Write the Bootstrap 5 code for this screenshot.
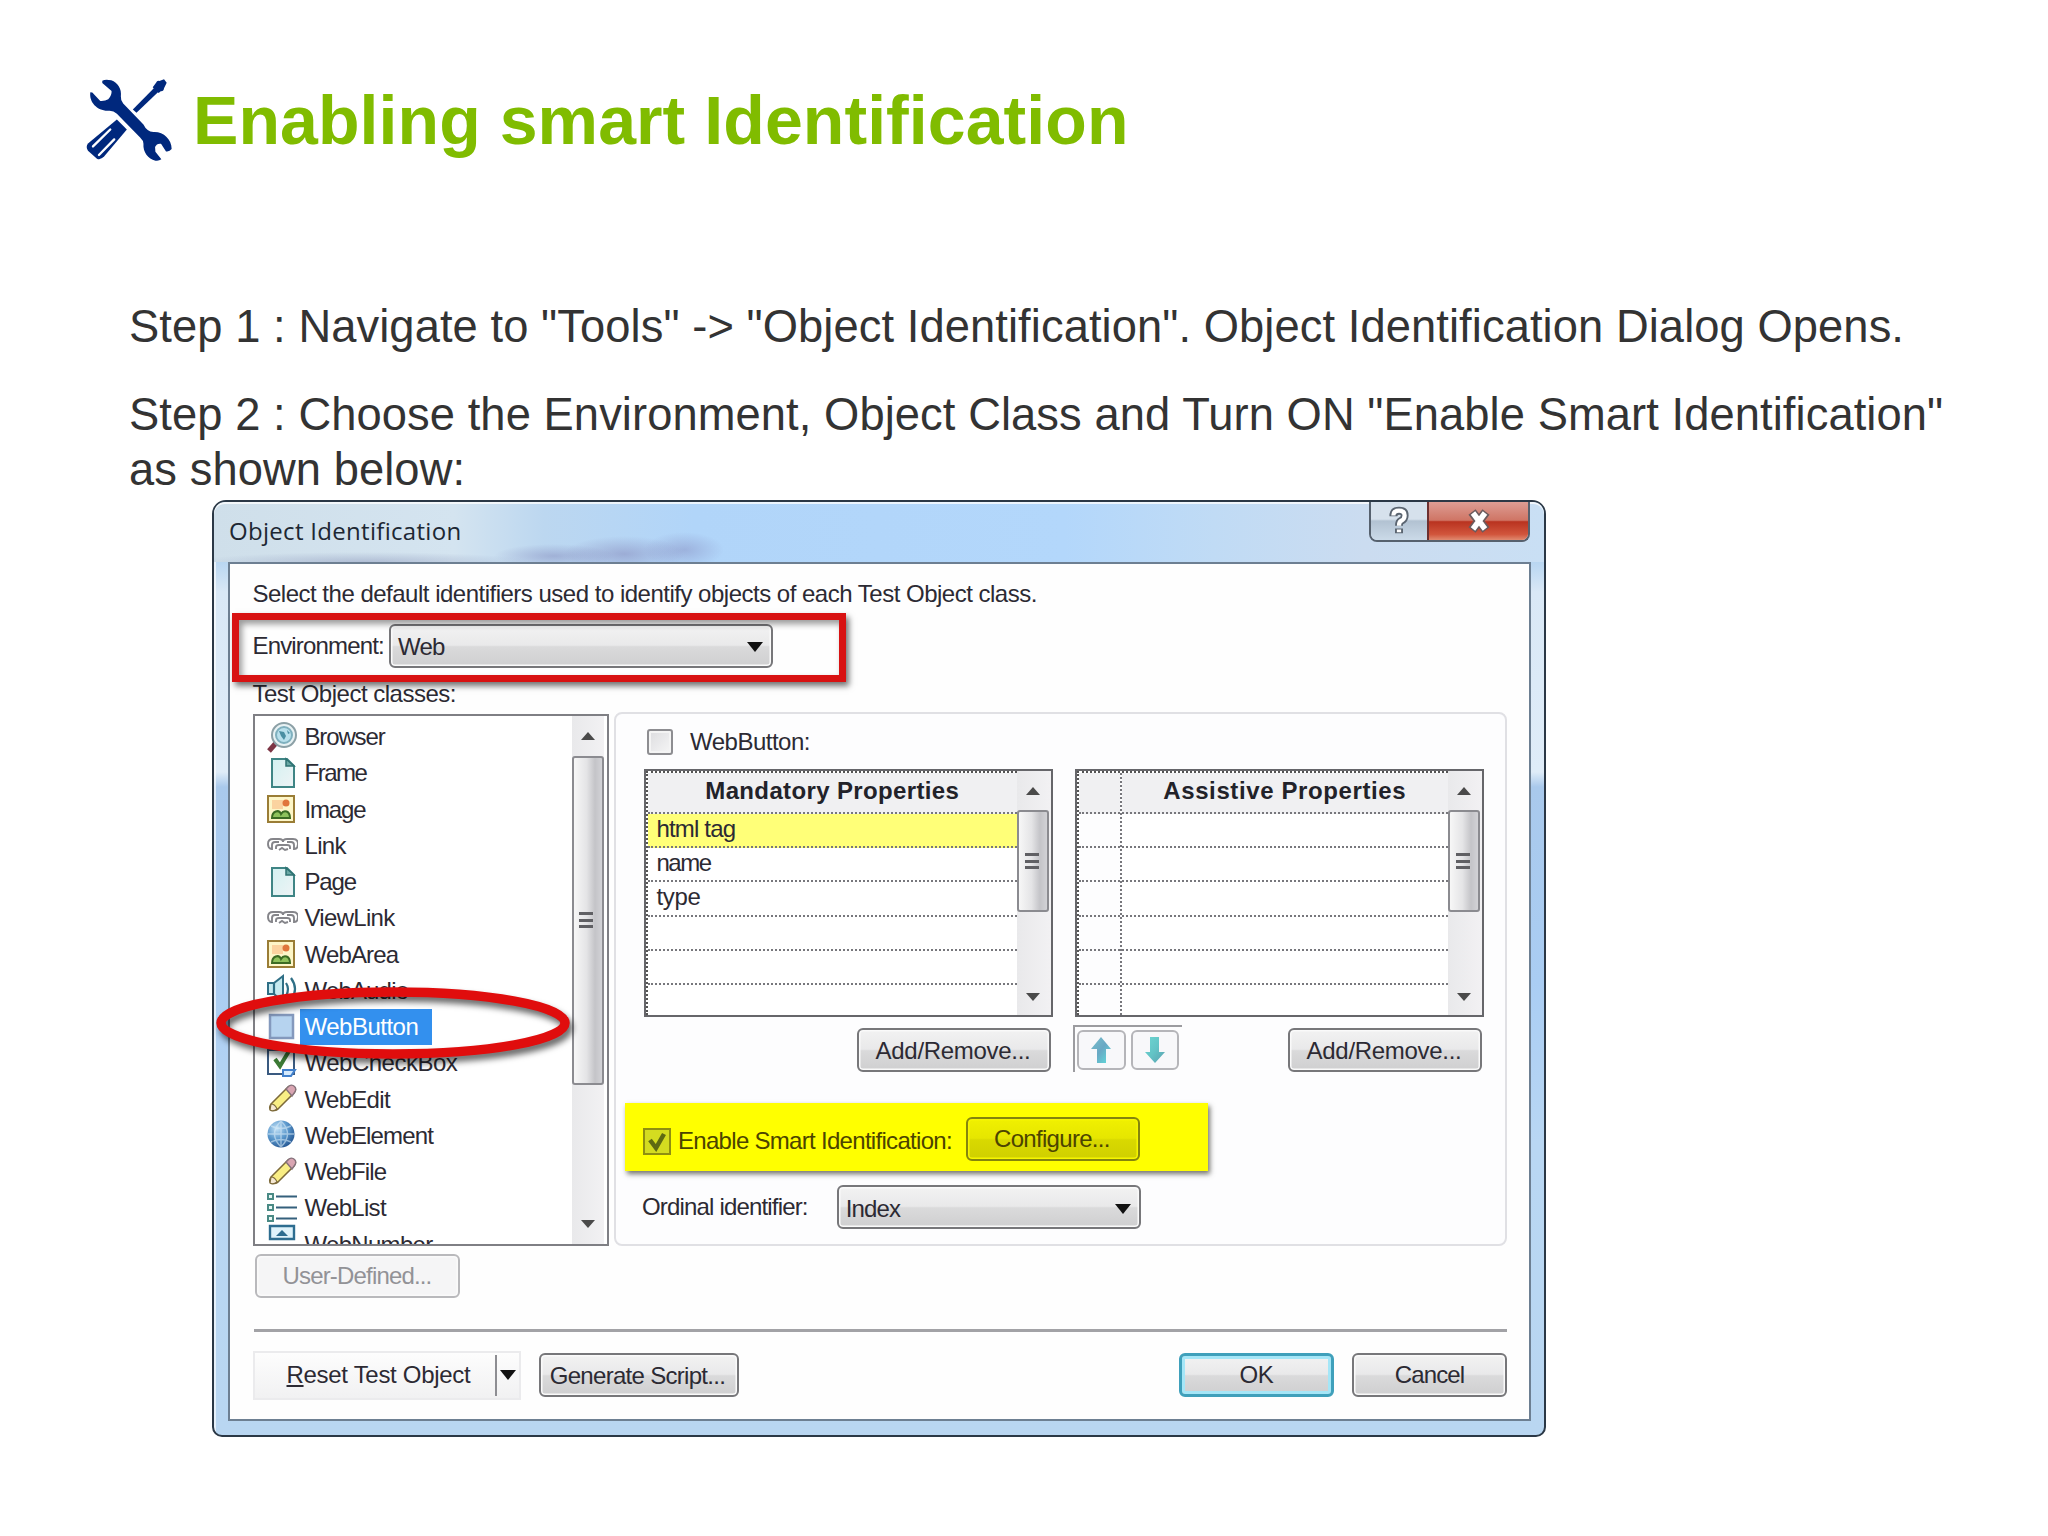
<!DOCTYPE html>
<html lang="en">
<head>
<meta charset="utf-8">
<title>Enabling smart Identification</title>
<link href="https://cdn.jsdelivr.net/npm/bootstrap@5.3.0/dist/css/bootstrap.min.css" rel="stylesheet">
<style>
body{width:2048px;height:1536px;overflow:hidden;background:#fff;font-family:"Liberation Sans",Arial,sans-serif;color:#333}
.slide{width:2048px;height:1536px;position:relative;padding:78px 0 0 86px}
.tools{width:87px;height:83px;display:block;margin-top:1px}
.slide-title{font-size:68px;font-weight:700;line-height:84px;letter-spacing:.08px;color:#80bc00;margin:0 0 0 20px;white-space:nowrap}
.steps{font-size:45.3px;line-height:55px;letter-spacing:.08px;padding:136.500px 0 0 43px;color:#333}
.steps p{margin:0 0 33.5px;white-space:nowrap}
.steps p+p{margin-bottom:0}
.dlg{width:1334px;height:937px;margin:3px 0 0 126px;border:2.5px solid #2b3846;border-radius:14px 14px 10px 10px;position:relative;font-size:24px;line-height:30px;color:#2c2a33;white-space:nowrap;
 background:linear-gradient(90deg,rgba(255,255,255,.65) 0 2px,transparent 2px),linear-gradient(180deg,transparent 0 60px,#d9e8f6 90px,#dfecf8 270px,#a9c9ec 285px,#aacdf3 480px,#b9d7f3 640px,#b9d6f1 100%),#b9d6f1}
.dlg-head{height:60px;border-radius:11px 11px 0 0;padding-left:15px;position:relative;box-shadow:inset 0 2px 0 rgba(255,255,255,.75);
 background:radial-gradient(ellipse 60px 12px at 340px 54px,rgba(120,120,175,.4),transparent),radial-gradient(ellipse 60px 18px at 410px 52px,rgba(120,115,170,.42),transparent),radial-gradient(ellipse 40px 18px at 470px 48px,rgba(125,125,180,.4),transparent),radial-gradient(ellipse 170px 10px at 150px 60px,rgba(125,135,175,.4),transparent),linear-gradient(90deg,#cfdfea 0,#d4e4f0 240px,#bcd7f0 330px,#b1d5f9 480px,#b3d7fb 850px,#c0dbf5 1000px,#cbdcf0 1150px,#c9dff4 100%)}
.dlg-name{font-family:"Open Sans","Noto Sans",sans-serif;font-size:24px;color:#1d2733;line-height:58px;letter-spacing:.3px}
.winbtns{height:40px;border:2px solid #56616e;border-top:0;border-radius:0 0 8px 8px;overflow:hidden;margin-right:14px}
.wb-help{width:58px;background:linear-gradient(#d6e1ec 0 45%,#b2c2d2 50%,#cbdae8);border-right:2px solid #6d3030}
.wb-close{width:99px;background:linear-gradient(#dd9d94 0,#cf7565 48%,#b93320 52%,#d1553c 85%,#e08a70)}
.client{margin:0 13px 0 13.5px;height:859px;border:2px solid #6d7f92;background:#fefefe;padding:0 22px 0 23px}
.ls-3{letter-spacing:-.3px}
.ls-5{letter-spacing:-.5px}
.ls-7{letter-spacing:-.7px}
.ls-8{letter-spacing:-.83px}
.ls-11{letter-spacing:-1.15px}
.ls-15{letter-spacing:-1.5px}
.r-intro{height:60px}
.r-env{height:44px}
.env-sel{width:384px;margin-left:5px}
.xpsel,.xpbtn{height:44px;border:2px solid #77777a;border-radius:6px;padding:0;background:linear-gradient(#f2f2f2 0,#e9e9ea 48%,#dadadb 52%,#cfcfd0 100%);box-shadow:inset 0 0 0 1.5px #fafafa;font-size:24px;line-height:30px;color:#2c2a33;display:flex;align-items:center}
.xpbtn{justify-content:center}
.xpsel{justify-content:space-between;padding:2px 8px 0 7px}
.tri{width:0;height:0;border:8px solid transparent;border-top:10px solid #111;border-bottom:0;display:block}
.r-cls{height:44px;padding-top:7px}
.left{width:356px;padding-top:2px}
.lbox{height:532px;border:2px solid #7f7f84;background:#fff;overflow:hidden;padding:3px 3px 0 13px}
.itm{height:36.25px;gap:4px}
.itm svg{width:31px;height:32px;flex:none;overflow:visible;margin:-1px 0 0 -1px}
.itm svg+.cap{margin-left:1px}
.itm .cap{line-height:36px;padding:0 2px}
.itm.on svg+.cap{background:#3390ee;color:#fff;width:132px;margin-left:-2px;padding-left:5px}
.itm svg.num{margin-top:-8px}
.sbar{width:32px;background:linear-gradient(90deg,#e9e9eb,#f2f1f3)}
.lbox .sbar{margin-top:-3px}
.sarr{height:40px}
.thumb{border:2px solid #8b8b90;border-radius:3px;background:linear-gradient(90deg,#f7f7f7,#e4e4e6 45%,#c4c4c8 75%,#d2d2d6)}
.thumb-l{height:329px}
.thumb-s{height:102px}
.grip{width:14px;height:17px;margin-right:3px;background:repeating-linear-gradient(#606064 0 3px,transparent 3px 6.6px)}
.u{border:0 solid transparent;border-width:0 7px 8px;border-bottom-color:#4a4a4a;display:block}
.d{border:0 solid transparent;border-width:8px 7px 0;border-top-color:#4a4a4a;display:block}
.grp{width:893px;height:534px;border:2px solid #e0e0e4;border-radius:8px;background:#fdfdfe}
.g-h{height:55px;padding-left:31px;gap:17px}
.cb{width:26px;height:26px;border:2px solid #8d8d91;border-radius:3px;background:linear-gradient(135deg,#dcdcdf,#f6f6f6);box-shadow:inset 0 0 0 2px #f4f4f4}
.tbls{padding-left:27.500px;gap:21.500px}
.tb{width:409.5px;height:248px;border:2.5px solid #66666a;background:#fff;overflow:hidden}
.tb-m{border-top:2px dotted #555;border-left:2px dotted #555}
.th{height:41px;background:#f0f0f2;font-weight:700;color:#222229;border-bottom:2px dotted #77777c;padding-bottom:3px;letter-spacing:.36px}
.th-a{letter-spacing:.61px}
.tr{height:34.2px;border-bottom:2px dotted #77777c;padding-left:9px;line-height:30px}
.tr.hl{background:#ffff78}
.c1{width:43px;flex:none;border-right:2px dotted #77777c;background:#fdfdfe}
.tb .sbar{width:34px;padding-right:2px}
.tb .sarr{height:39px}
.tb .mt-auto{height:36px}
.b-row{margin:11px 0 0 241px}
.add-b{width:194px}
.add-b span,.gen span{margin:2px 2px 0 0}
.tbar{width:109px;height:47px;margin:-3px 106px 0 22px;border-top:2px solid #9c9ca0;border-left:2px solid #9c9ca0;gap:5px;padding:3px 0 0 2px}
.tbar span{width:48.5px;height:40px;border:2px solid #b5b5b9;border-radius:6px;background:#f8f8fa;display:flex;justify-content:center;align-items:center}
.yel{width:583px;height:68px;margin:31px 0 0 9px;background:#ffff00;box-shadow:2px 3px 5px rgba(70,70,60,.75);padding:4px 0 0 18px;color:#4c4400}
.yel .xpbtn{width:174px;margin-left:14px;padding-right:2px;background:linear-gradient(#f0f000,#e6e600 48%,#d9d900 52%,#cfcf00);border-color:#85850d;box-shadow:inset 0 0 0 1.5px #f6f600;color:#4c4400}
.ycb{width:28px;height:27px;margin:4px 7px 0 0;border:2px solid #8f8f10;background:#d4dc20}
.ycb+span{padding-top:4px}
.ord{margin:14px 0 0 26px;height:44px}
.ord .xpsel{width:304px;margin-left:29px;padding-top:3px}
.ud{width:205px;margin:8px 0 0 2px;border-color:#b9b9bc;background:#f5f5f6;color:#929296}
.sepl{height:2.5px;background:#a2a2a6;margin:31px 0 0 1px}
.foot{margin-top:19px;height:48px}
.foot .xpbtn{margin-top:2px;padding-top:1px}
.reset{width:268px;height:49px;border:2px solid #ebebed;background:linear-gradient(#fdfdfd,#f1f1f2);padding-left:32px}
.reset .vl{width:2px;height:41px;margin:0 3px 0 25px;background:#8d8d92}
.gen{width:200px;margin-left:18px}
.okc{width:155px}
.okc+.okc{margin-left:18px}
.ok{border:3px solid #3fa0bb;box-shadow:inset 0 0 0 3px #a5e6f7}
.redbox{position:absolute;left:17.5px;top:110.500px;width:614px;height:69px;border:7px solid #d81212;box-shadow:3px 4px 6px rgba(0,0,0,.55),inset 3px 4px 6px rgba(0,0,0,.4)}
.ring{position:absolute;left:-5px;top:478px;width:370px;height:90px;filter:drop-shadow(3px 5px 3px rgba(0,0,0,.6))}
</style>
<script src="https://cdn.jsdelivr.net/npm/bootstrap@5.3.0/dist/js/bootstrap.bundle.min.js"></script>
</head>
<body>
<svg width="0" height="0" class="position-absolute">
<defs>
<linearGradient id="gpg" x1="0" y1="0" x2="1" y2="1"><stop offset="0" stop-color="#d3f1f1"/><stop offset="1" stop-color="#eef3f5"/></linearGradient>
<radialGradient id="ggl" cx=".35" cy=".3" r=".8"><stop offset="0" stop-color="#c3e2f7"/><stop offset=".5" stop-color="#5b98cc"/><stop offset="1" stop-color="#1f4f8c"/></radialGradient>
<linearGradient id="gar" x1="0" y1="0" x2="1" y2="1"><stop offset="0" stop-color="#79bfcb"/><stop offset=".5" stop-color="#69a8c4"/><stop offset="1" stop-color="#5fe0dd"/></linearGradient>
<linearGradient id="gad" x1="0" y1="0" x2="1" y2="1"><stop offset="0" stop-color="#6fd6d2"/><stop offset=".5" stop-color="#63c4c6"/><stop offset="1" stop-color="#5a9fae"/></linearGradient>
<symbol id="i-page" viewBox="0 0 31 32"><path d="M5 2h15l7 7v21H5z" fill="url(#gpg)" stroke="#3f8585" stroke-width="2"/><path d="M19 2v7h8z" fill="#6aa9a6" stroke="#2f7272" stroke-width="1.5"/></symbol>
<symbol id="i-img" viewBox="0 0 31 32"><path d="M1 3h26v26H1z" fill="#fdf6c8" stroke="#9a7d36" stroke-width="2"/><path d="M5 7h11v9H5z" fill="#fbd3a0"/><circle cx="19" cy="10" r="3.500" fill="#e0763c"/><path d="M5 25c0-7 7-9 9-4 3-5 9-3 9 4z" fill="#8fc25c" stroke="#3c6b23" stroke-width="2"/></symbol>
<symbol id="i-link" viewBox="0 0 31 32"><path d="M4 20q-3-1-3-5 0-5 5-5h6q4 0 4 3 0-3 4-3h6q5 0 5 5 0 4-3 5M5 21v-5q0-3 3-3h4M27 21v-5q0-3-3-3h-4M9 20v-2q0-2 3-2h8q3 0 3 2v2M12 21l3-2 3 2 3-1" fill="none" stroke="#85858a" stroke-width="1.9"/></symbol>
<symbol id="i-pencil" viewBox="0 0 31 32"><path d="M3 26q-1-3 2-6L21 4q3-2 6 0t0 6L11 26q-4 3-8 0z" fill="#f9ee84" stroke="#7d6a3a" stroke-width="1.6"/><path d="M19 6l3-3q3-2 5.500.5t0 6L25 13z" fill="#d9a5b2" stroke="#86727c" stroke-width="1.4"/><path d="M3 27l1-6q4 0 6 5-4 3-7 1z" fill="#f6e9d4" stroke="#7d6a3a" stroke-width="1.2"/></symbol>
</defs>
</svg>
<main class="slide">
<header class="d-flex">
<svg class="tools" viewBox="50 55 260 250"><g fill="#00287d"><path d="M190 147L254 82 268 93 201 157z"/><path d="M250 80L260 66Q263 59 270 61L284 56 292 66 284 83Q283 93 274 92L268 97 260 91z"/><path d="M142 177L172 207 104 288Q92 301 82 295L55 271Q47 260 55 249z"/><path d="M98 60Q108 55 125 59C145 66 157 85 154 108Q153 120 161 129L222 192Q232 213 252 215C281 213 307 236 307 266Q300 275 290 273L275 250Q262 248 257 260L258 274 276 297Q268 303 258 301C236 296 220 275 222 250Q222 240 212 231L142 160Q130 148 114 151C82 150 58 125 62 95L68 96 92 121Q106 122 116 116 127 104 126 91L98 67z"/></g><path d="M122 207L70 258M134 237L88 284" stroke="#fff" stroke-width="7" stroke-linecap="round"/></svg>
<h1 class="slide-title">Enabling smart Identification</h1>
</header>
<section class="steps">
<p>Step 1 : Navigate to "Tools" -&gt; "Object Identification". Object Identification Dialog Opens.</p>
<p>Step 2 : Choose the Environment, Object Class and Turn ON "Enable Smart Identification"<br>as shown below:</p>
</section>
<section class="dlg">
<div class="dlg-head d-flex justify-content-between align-items-start">
<span class="dlg-name">Object Identification</span>
<div class="winbtns d-flex">
<div class="wb-help d-flex align-items-center justify-content-center"><svg width="24" height="30" viewBox="0 0 24 32"><path d="M6 11Q6 5 12 5t6 5q0 4-4 6-2 1-2 5M12 24v5" fill="none" stroke="#5a6470" stroke-width="8.500"/><path d="M6 10Q6 5 12 5t6 5q0 4-4 6-2 1-2 5M12 25v3" fill="none" stroke="#fff" stroke-width="4.500"/></svg></div>
<div class="wb-close d-flex align-items-center justify-content-center"><svg width="26" height="24" viewBox="0 0 26 24"><path d="M6 3l14 18M20 3L6 21" stroke="#6b5a5c" stroke-width="9"/><path d="M7 4l12 16M19 4L7 20" stroke="#fff" stroke-width="5.500"/></svg></div>
</div>
</div>
<div class="client">
<div class="r-intro d-flex align-items-center"><span class="ls-5">Select the default identifiers used to identify objects of each Test Object class.</span></div>
<div class="r-env d-flex align-items-center"><span class="ls-8">Environment:</span><div class="xpsel env-sel"><span class="ls-7">Web</span><i class="tri"></i></div></div>
<div class="r-cls d-flex align-items-center"><span class="ls-5">Test Object classes:</span></div>
<div class="d-flex justify-content-between">
<div class="left">
<div class="lbox d-flex justify-content-between">
<div>
<div class="itm d-flex align-items-center"><svg viewBox="0 0 31 32"><path d="M9 22L2 30" stroke="#7d3545" stroke-width="5"/><circle cx="17" cy="14" r="12" fill="#e8f2f4" stroke="#8ca0a6" stroke-width="2"/><circle cx="17" cy="14" r="8" fill="#b9e0ec" stroke="#7fb0be" stroke-width="2"/><path d="M12 10l5 1 2 4-2 4-3-4zM20 9l3 3-2 1z" fill="#4a8ea2"/></svg><span class="cap ls-11">Browser</span></div>
<div class="itm d-flex align-items-center"><svg><use href="#i-page"/></svg><span class="cap ls-15">Frame</span></div>
<div class="itm d-flex align-items-center"><svg><use href="#i-img"/></svg><span class="cap ls-11">Image</span></div>
<div class="itm d-flex align-items-center"><svg><use href="#i-link"/></svg><span class="cap ls-7">Link</span></div>
<div class="itm d-flex align-items-center"><svg><use href="#i-page"/></svg><span class="cap ls-11">Page</span></div>
<div class="itm d-flex align-items-center"><svg><use href="#i-link"/></svg><span class="cap ls-7">ViewLink</span></div>
<div class="itm d-flex align-items-center"><svg><use href="#i-img"/></svg><span class="cap ls-8">WebArea</span></div>
<div class="itm d-flex align-items-center"><svg viewBox="0 0 31 32"><path d="M1 9h6l9-7v26l-9-8H1z" fill="#c6eaf0" stroke="#2f6f86" stroke-width="2"/><path d="M7 9v11M19 9q4 6 0 13M24 4q8 11 0 22" fill="none" stroke="#2f6f86" stroke-width="2.200"/></svg><span class="cap ls-8">WebAudio</span></div>
<div class="itm on d-flex align-items-center"><svg viewBox="0 0 31 32"><path d="M3 4h23v23H3z" fill="#b6d3ef" stroke="#8499bd" stroke-width="2.500"/></svg><span class="cap ls-5">WebButton</span></div>
<div class="itm d-flex align-items-center"><svg viewBox="0 0 31 32"><path d="M1 3h26v24H1z" fill="#fff" stroke="#3a5a80" stroke-width="2"/><path d="M8 12l5 7L22 4" fill="none" stroke="#3c7a35" stroke-width="4"/><path d="M16 23h12l-4 6h-8z" fill="#d5eafc" stroke="#4180cc" stroke-width="2"/></svg><span class="cap ls-5">WebCheckBox</span></div>
<div class="itm d-flex align-items-center"><svg><use href="#i-pencil"/></svg><span class="cap ls-7">WebEdit</span></div>
<div class="itm d-flex align-items-center"><svg viewBox="0 0 31 32"><circle cx="14" cy="15" r="13.500" fill="url(#ggl)"/><path d="M1 15h26M14 2v26M4 7q10 5 20 0M4 23q10-5 20 0M14 2q-13 13 0 26M14 2q13 13 0 26" fill="none" stroke="#d5e9f7" stroke-opacity=".6" stroke-width="1.400"/></svg><span class="cap ls-8">WebElement</span></div>
<div class="itm d-flex align-items-center"><svg><use href="#i-pencil"/></svg><span class="cap ls-8">WebFile</span></div>
<div class="itm d-flex align-items-center"><svg viewBox="0 0 31 32"><path d="M1 2h5v5H1zM1 13h5v5H1zM1 24h5v5H1z" fill="#e7f6f4" stroke="#4a8a85" stroke-width="2"/><path d="M9 4.500h21M9 15.500h21M9 26.500h21" stroke="#35607c" stroke-width="2.200"/></svg><span class="cap ls-7">WebList</span></div>
<div class="itm d-flex align-items-center"><svg class="num" viewBox="0 0 31 32"><path d="M3 1h24v13H3z" fill="#dff3fb" stroke="#2d6d90" stroke-width="2.400"/><path d="M15 5l6 6H9z" fill="#2d6d90"/></svg><span class="cap ls-7">WebNumber</span></div>
</div>
<div class="sbar d-flex flex-column">
<div class="sarr d-flex align-items-center justify-content-center"><i class="u"></i></div>
<div class="thumb thumb-l d-flex align-items-center justify-content-center"><i class="grip"></i></div>
<div class="mt-auto sarr d-flex align-items-center justify-content-center"><i class="d"></i></div>
</div>
</div>
<div class="xpbtn ud"><span class="ls-8">User-Defined...</span></div>
</div>
<div class="grp">
<div class="g-h d-flex align-items-center"><span class="cb"></span><span class="ls-5">WebButton:</span></div>
<div class="tbls d-flex">
<div class="tb d-flex">
<div class="tb-m flex-grow-1">
<div class="th d-flex align-items-center justify-content-center">Mandatory Properties</div>
<div class="tr hl ls-8">html tag</div><div class="tr ls-15">name</div><div class="tr ls-3">type</div><div class="tr"></div><div class="tr"></div>
</div>
<div class="sbar d-flex flex-column"><div class="sarr d-flex align-items-center justify-content-center"><i class="u"></i></div><div class="thumb thumb-s d-flex align-items-center justify-content-center"><i class="grip"></i></div><div class="mt-auto sarr d-flex align-items-center justify-content-center"><i class="d"></i></div></div>
</div>
<div class="tb d-flex">
<div class="tb-m flex-grow-1 d-flex">
<div class="c1"><div class="th"></div><div class="tr"></div><div class="tr"></div><div class="tr"></div><div class="tr"></div><div class="tr"></div></div>
<div class="flex-grow-1"><div class="th th-a d-flex align-items-center justify-content-center">Assistive Properties</div><div class="tr"></div><div class="tr"></div><div class="tr"></div><div class="tr"></div><div class="tr"></div></div>
</div>
<div class="sbar d-flex flex-column"><div class="sarr d-flex align-items-center justify-content-center"><i class="u"></i></div><div class="thumb thumb-s d-flex align-items-center justify-content-center"><i class="grip"></i></div><div class="mt-auto sarr d-flex align-items-center justify-content-center"><i class="d"></i></div></div>
</div>
</div>
<div class="b-row d-flex">
<div class="xpbtn add-b"><span class="ls-3">Add/Remove...</span></div>
<div class="tbar d-flex"><span><svg width="22" height="28" viewBox="0 0 22 28"><path d="M11 1l10 12h-5v14H7V13H1z" fill="url(#gar)"/></svg></span><span><svg width="22" height="28" viewBox="0 0 22 28"><path d="M11 27L1 16h5V1h9v15h6z" fill="url(#gad)"/></svg></span></div>
<div class="xpbtn add-b"><span class="ls-3">Add/Remove...</span></div>
</div>
<div class="yel d-flex align-items-center"><span class="ycb"><svg width="24" height="23" class="d-block" viewBox="0 0 24 23"><path d="M5 10l6 8L19 4" fill="none" stroke="#5e6a12" stroke-width="4.500"/></svg></span><span class="ls-7">Enable Smart Identification:</span><div class="xpbtn"><span class="ls-7">Configure...</span></div></div>
<div class="ord d-flex align-items-center"><span class="ls-8">Ordinal identifier:</span><div class="xpsel"><span class="ls-8">Index</span><i class="tri"></i></div></div>
</div>
</div>
<div class="sepl"></div>
<div class="foot d-flex">
<div class="reset d-flex align-items-center"><span class="ls-3"><u>R</u>eset Test Object</span><span class="vl"></span><i class="tri"></i></div>
<div class="xpbtn gen"><span class="ls-7">Generate Script...</span></div>
<div class="xpbtn okc ok ms-auto"><span class="ls-3">OK</span></div>
<div class="xpbtn okc"><span class="ls-8">Cancel</span></div>
</div>
</div>
<div class="redbox"></div>
<svg class="ring" viewBox="0 0 370 90"><ellipse cx="184" cy="43" rx="172" ry="31" fill="none" stroke="#e00d0d" stroke-width="9.500"/></svg>
</section>
</main>
</body>
</html>
